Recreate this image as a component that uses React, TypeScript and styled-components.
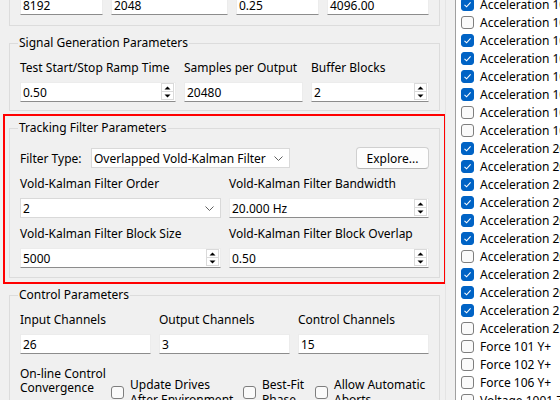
import React from "react";
import styled, { createGlobalStyle } from "styled-components";

const GlobalStyle = createGlobalStyle`
  html, body {
    margin: 0;
    padding: 0;
    background: #f0f0f0;
  }
  body {
    font-family: "Noto Sans", "Segoe UI", sans-serif;
    font-size: 12px;
    color: #000;
  }
`;

const channels: [string, boolean][] = [
  ["Acceleration 101 X+", true],
  ["Acceleration 102 X+", false],
  ["Acceleration 103 X+", true],
  ["Acceleration 104 X+", true],
  ["Acceleration 105 X+", true],
  ["Acceleration 106 X+", true],
  ["Acceleration 107 X+", false],
  ["Acceleration 108 X+", false],
  ["Acceleration 201 Y+", true],
  ["Acceleration 202 Y+", true],
  ["Acceleration 203 Y+", true],
  ["Acceleration 204 Y+", true],
  ["Acceleration 205 Y+", true],
  ["Acceleration 206 Y+", true],
  ["Acceleration 207 Y+", false],
  ["Acceleration 208 Y+", true],
  ["Acceleration 209 Y+", true],
  ["Acceleration 210 Y+", true],
  ["Acceleration 211 Y+", false],
  ["Force 101 Y+", false],
  ["Force 102 Y+", false],
  ["Force 106 Y+", false],
  ["Voltage 1001 Z+", false],
];

const Check = ({ checked }: { checked: boolean }) => (
  <SCheck $checked={checked}>
    {checked && (
      <svg width="11" height="11" viewBox="0 0 11 11">
        <path d="M2.5 5.8 L4.6 7.8 L8.6 3.4" fill="none" stroke="#fff" strokeWidth="1.1" />
      </svg>
    )}
  </SCheck>
);

const Spinner = () => (
  <SSpin>
    <SSpinHalf>
      <svg width="7" height="4" viewBox="0 0 7 4">
        <path d="M0.5 3.5 L3.5 0.5 L6.5 3.5 Z" fill="#000" />
      </svg>
    </SSpinHalf>
    <SSpinHalf>
      <svg width="7" height="4" viewBox="0 0 7 4">
        <path d="M0.5 0.5 L3.5 3.5 L6.5 0.5 Z" fill="#000" />
      </svg>
    </SSpinHalf>
  </SSpin>
);

const Chevron = () => (
  <svg width="9" height="5" viewBox="0 0 9 5">
    <path d="M0.5 0.5 L4.5 4.5 L8.5 0.5" fill="none" stroke="#606060" strokeWidth="1" />
  </svg>
);

const Field = ({ label, value, spin }: { label: string; value: string; spin?: boolean }) => (
  <div>
    <SLabel>{label}</SLabel>
    <STextBox>
      <SValue>{value}</SValue>
      {spin && <Spinner />}
    </STextBox>
  </div>
);

const App = () => {
  return (
    <SWindow>
      <GlobalStyle />
      <SLeftPane>
        <SLeftInner>
          <SGroup $bottom={10}>
            <SLegend>Analysis Parameters</SLegend>
            <SRow $cols="83px 117px 83px 1fr">
              <Field label="Frame Size" value="8192" />
              <Field label="Spectral Lines" value="2048" />
              <Field label="Overlap" value="0.25" />
              <Field label="Sample Rate" value="4096.00" />
            </SRow>
          </SGroup>

          <SGroup>
            <SLegend>Signal Generation Parameters</SLegend>
            <SRow $cols="156px 119px 1fr">
              <Field label="Test Start/Stop Ramp Time" value="0.50" spin />
              <Field label="Samples per Output" value="20480" />
              <Field label="Buffer Blocks" value="2" spin />
            </SRow>
          </SGroup>

          <SHighlight>
            <SGroup $top={12} $bottom={9}>
              <SLegend>Tracking Filter Parameters</SLegend>
              <SFilterRow>
                <SInlineLabel>Filter Type:</SInlineLabel>
                <SCombo $width={199}>
                  <SValue>Overlapped Vold-Kalman Filter</SValue>
                  <Chevron />
                </SCombo>
                <SButton>Explore...</SButton>
              </SFilterRow>
              <SRow $cols="201px 1fr" $top={8}>
                <div>
                  <SLabel>Vold-Kalman Filter Order</SLabel>
                  <SCombo>
                    <SValue>2</SValue>
                    <Chevron />
                  </SCombo>
                </div>
                <Field label="Vold-Kalman Filter Bandwidth" value="20.000 Hz" spin />
                <Field label="Vold-Kalman Filter Block Size" value="5000" spin />
                <Field label="Vold-Kalman Filter Block Overlap" value="0.50" spin />
              </SRow>
            </SGroup>
          </SHighlight>

          <SGroup>
            <SLegend>Control Parameters</SLegend>
            <SRow $cols="1fr 1fr 1fr">
              <Field label="Input Channels" value="26" />
              <Field label="Output Channels" value="3" />
              <Field label="Control Channels" value="15" />
            </SRow>
            <SConvergence>
              <SMultiLabel>
                On-line Control
                <br />
                Convergence
              </SMultiLabel>
              <SOption>
                <Check checked={false} />
                <SMultiText>
                  Update Drives
                  <br />
                  After Environment
                </SMultiText>
              </SOption>
              <SOption>
                <Check checked={false} />
                <SMultiText>
                  Best-Fit
                  <br />
                  Phase
                </SMultiText>
              </SOption>
              <SOption>
                <Check checked={false} />
                <SMultiText>
                  Allow Automatic
                  <br />
                  Aborts
                </SMultiText>
              </SOption>
            </SConvergence>
          </SGroup>
        </SLeftInner>
      </SLeftPane>

      <SList>
        {channels.map(([name, checked]) => (
          <SListRow key={name}>
            <Check checked={checked} />
            <span>{name}</span>
          </SListRow>
        ))}
      </SList>
    </SWindow>
  );
};

export default App;

const SWindow = styled.div`
  display: flex;
  width: 560px;
  height: 400px;
  overflow: hidden;
`;

const SLeftPane = styled.div`
  width: 445px;
  flex-shrink: 0;
  border-right: 1px solid #e4e4e4;
  overflow: hidden;
`;

const SLeftInner = styled.div`
  display: flex;
  flex-direction: column;
  align-items: flex-start;
  gap: 9px;
  padding-left: 9px;
  margin-top: -52px;
`;

const SGroup = styled.fieldset<{ $top?: number; $bottom?: number }>`
  margin: 0;
  width: 431px;
  min-width: 0;
  box-sizing: border-box;
  padding: ${(p) => p.$top ?? 9}px 10px ${(p) => p.$bottom ?? 8}px;
  border: 1px solid #dcdcdc;
`;

const SLegend = styled.legend`
  padding: 0 1px;
  margin-left: -2px;
  line-height: 16px;
  font-size: 12px;
`;

const SHighlight = styled.div`
  border: 2px solid #ff0000;
  padding: 4px;
  margin: -6px;
`;

const SRow = styled.div<{ $cols: string; $top?: number }>`
  display: grid;
  grid-template-columns: ${(p) => p.$cols};
  column-gap: 8px;
  row-gap: 8px;
  margin-top: ${(p) => p.$top ?? 0}px;
`;

const SLabel = styled.div`
  line-height: 16px;
  white-space: nowrap;
  margin-bottom: 6px;
`;

const STextBox = styled.div`
  display: flex;
  align-items: stretch;
  height: 20px;
  box-sizing: border-box;
  background: #fff;
  border: 1px solid #ececec;
  border-bottom-color: #8c8c8c;
`;

const SValue = styled.span`
  flex: 1;
  display: flex;
  align-items: center;
  padding-left: 2px;
  white-space: nowrap;
  overflow: hidden;
`;

const SSpin = styled.div`
  display: flex;
  flex-direction: column;
  width: 13px;
  margin: 0 1px 1px 0;
  border: 1px solid #dadada;
  box-sizing: border-box;
`;

const SSpinHalf = styled.div`
  flex: 1;
  display: flex;
  align-items: center;
  justify-content: center;
  & + & {
    border-top: 1px solid #dadada;
  }
`;

const SFilterRow = styled.div`
  display: flex;
  align-items: center;
  height: 20px;
`;

const SInlineLabel = styled.span`
  width: 71px;
  flex-shrink: 0;
`;

const SCombo = styled.div<{ $width?: number }>`
  display: flex;
  align-items: center;
  height: 20px;
  ${(p) => (p.$width ? `width: ${p.$width}px;` : "")}
  box-sizing: border-box;
  background: #fff;
  border: 1px solid #d9d9d9;
  padding-right: 6px;
  gap: 6px;
`;

const SButton = styled.button`
  margin-left: auto;
  height: 22px;
  width: 73px;
  padding: 0;
  font-family: inherit;
  font-size: 12px;
  color: #000;
  background: #fdfdfd;
  border: 1px solid #d0d0d0;
  border-bottom-color: #b8b8b8;
  border-radius: 4px;
`;

const SConvergence = styled.div`
  display: grid;
  grid-template-columns: 91px 132px 72px 1fr;
  margin-top: 13px;
  line-height: 15px;
`;

const SMultiLabel = styled.div`
  line-height: 14px;
`;

const SOption = styled.div`
  display: flex;
  align-items: center;
  gap: 6px;
  margin-top: 10px;
`;

const SMultiText = styled.span`
  white-space: nowrap;
`;

const SCheck = styled.span<{ $checked: boolean }>`
  display: inline-flex;
  align-items: center;
  justify-content: center;
  flex-shrink: 0;
  width: 13px;
  height: 13px;
  box-sizing: border-box;
  border-radius: 3px;
  border: 1px solid ${(p) => (p.$checked ? "#0063c5" : "#7e7e7e")};
  background: ${(p) => (p.$checked ? "#0063c5" : "#fafafa")};
`;

const SList = styled.div`
  flex: 1;
  margin-left: 9px;
  background: #fff;
  border-left: 1px solid #a0a0a0;
  overflow: hidden;
  padding-left: 5px;
`;

const SListRow = styled.div`
  display: flex;
  align-items: center;
  gap: 6px;
  height: 18px;
  white-space: nowrap;
  &:first-child {
    margin-top: -5px;
  }
`;
